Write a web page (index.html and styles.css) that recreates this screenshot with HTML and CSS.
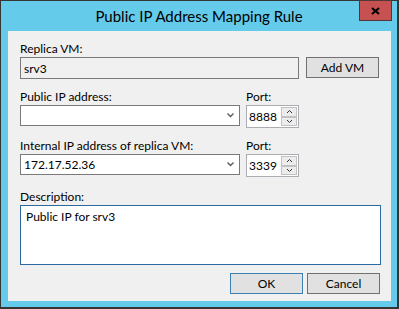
FILE: index.html
```html
<!DOCTYPE html>
<html lang="en">
<head>
    <meta charset="UTF-8">
    <title>Public IP Address Mapping Rule</title>
    <link rel="stylesheet" href="styles.css">
</head>
<body>
    <div class="window">
        <div class="titlebar">
            <div class="title">Public IP Address Mapping Rule</div>
            <div class="close">
                <svg width="9" height="8" viewBox="0 0 9 8"><path d="M1 1 L8 7 M8 1 L1 7" stroke="#000" stroke-width="2"/></svg>
            </div>
        </div>
        <div class="content">
            <div class="label">Replica VM:</div>
            <div class="row1">
                <input class="readonly" type="text" value="srv3" readonly>
                <button class="btn">Add VM</button>
            </div>

            <div class="pair first">
                <div class="label">Public IP address:</div>
                <div class="label">Port:</div>
                <div class="combo">
                    <input type="text" value="">
                    <svg class="chev" width="7" height="5" viewBox="0 0 7 5"><path d="M0.5 0.5 L3.5 3.5 L6.5 0.5" stroke="#5a5a5a" stroke-width="1.4" fill="none"/></svg>
                </div>
                <div class="spin">
                    <input type="text" value="8888">
                    <div class="spin-btns">
                        <div class="spin-btn"><svg width="5" height="3" viewBox="0 0 5 3"><path d="M0 3 L2.5 0.5 L5 3" stroke="#333" stroke-width="1" fill="none"/></svg></div>
                        <div class="spin-btn"><svg width="5" height="3" viewBox="0 0 5 3"><path d="M0 0 L2.5 2.5 L5 0" stroke="#333" stroke-width="1" fill="none"/></svg></div>
                    </div>
                </div>
            </div>

            <div class="pair">
                <div class="label">Internal IP address of replica VM:</div>
                <div class="label">Port:</div>
                <div class="combo">
                    <input type="text" value="172.17.52.36">
                    <svg class="chev" width="7" height="5" viewBox="0 0 7 5"><path d="M0.5 0.5 L3.5 3.5 L6.5 0.5" stroke="#5a5a5a" stroke-width="1.4" fill="none"/></svg>
                </div>
                <div class="spin">
                    <input type="text" value="3339">
                    <div class="spin-btns">
                        <div class="spin-btn"><svg width="5" height="3" viewBox="0 0 5 3"><path d="M0 3 L2.5 0.5 L5 3" stroke="#333" stroke-width="1" fill="none"/></svg></div>
                        <div class="spin-btn"><svg width="5" height="3" viewBox="0 0 5 3"><path d="M0 0 L2.5 2.5 L5 0" stroke="#333" stroke-width="1" fill="none"/></svg></div>
                    </div>
                </div>
            </div>

            <div class="label desc-label">Description:</div>
            <textarea class="desc">Public IP for srv3</textarea>

            <div class="footer">
                <button class="btn default">OK</button>
                <button class="btn">Cancel</button>
            </div>
        </div>
    </div>
</body>
</html>
```
FILE: styles.css
```css
body {
    margin: 0;
    font-family: Lato, "Segoe UI", sans-serif;
    font-size: 12px;
    color: #000;
}
.window {
    width: 399px;
    height: 309px;
    box-sizing: border-box;
    background: #65cbea;
    border: 1px solid #353535;
    border-right-width: 2px;
    border-bottom-width: 2px;
    padding: 0 6px 6px 7px;
    display: flex;
    flex-direction: column;
}
.titlebar {
    margin: 0 -6px 0 -7px;
    height: 30px;
    display: grid;
    grid-template-columns: 1fr auto 1fr;
}
.title {
    grid-column: 2;
    font-size: 15px;
    line-height: 30px;
}
.close {
    grid-column: 3;
    justify-self: end;
    margin: -1px 5px 0 0;
    width: 33px;
    height: 21px;
    box-sizing: border-box;
    background: #c75050;
    border: 1px solid #503838;
    display: flex;
    align-items: center;
    justify-content: center;
}
.content {
    flex: 1;
    background: #f0f0f0;
    padding: 10px 11px 0 12px;
}
.label {
    height: 16px;
    line-height: 16px;
    white-space: nowrap;
}
input, textarea, button {
    font: inherit;
    color: #000;
}
.row1 {
    display: flex;
    gap: 7px;
    align-items: flex-start;
}
.readonly {
    width: 279px;
    height: 22px;
    box-sizing: border-box;
    border: 1px solid #7a7a7a;
    background: #f0f0f0;
    padding: 0 3px;
    outline: none;
}
.btn {
    width: 73px;
    height: 21px;
    box-sizing: border-box;
    border: 1px solid #707070;
    background: #e1e1e1;
    padding: 0;
    line-height: 18px;
}
.btn.default {
    border-color: #3c7fb1;
}
.pair {
    display: grid;
    grid-template-columns: 220px 53px;
    column-gap: 6px;
    align-items: start;
    margin-top: 10px;
}
.combo {
    height: 21px;
    box-sizing: border-box;
    border: 1px solid #7a7a7a;
    background: #fff;
    display: flex;
    align-items: center;
}
.combo input, .spin input {
    flex: 1;
    min-width: 0;
    border: none;
    outline: none;
    background: transparent;
    padding: 0 3px;
    height: 100%;
    box-sizing: border-box;
}
.chev {
    margin-right: 5px;
}
.spin {
    height: 23px;
    box-sizing: border-box;
    border: 1px solid #abadb3;
    background: #fff;
    display: flex;
}
.spin input {
    padding: 0 2px;
}
.spin-btns {
    width: 17px;
    box-sizing: border-box;
    padding: 1px 1px 1px 0;
    display: flex;
    flex-direction: column;
}
.spin-btn {
    flex: 1;
    border: 1px solid #c2c2c2;
    background: #ececec;
    display: flex;
    align-items: center;
    justify-content: center;
}
.desc-label {
    margin-top: 12px;
}
.desc {
    display: block;
    width: 361px;
    height: 60px;
    box-sizing: border-box;
    border: 1px solid #2a6aa0;
    background: #fff;
    padding: 3px 5px;
    line-height: 16px;
    resize: none;
    outline: none;
    margin: 0;
}
.footer {
    display: flex;
    justify-content: flex-end;
    gap: 4px;
    margin-top: 8px;
}
```
